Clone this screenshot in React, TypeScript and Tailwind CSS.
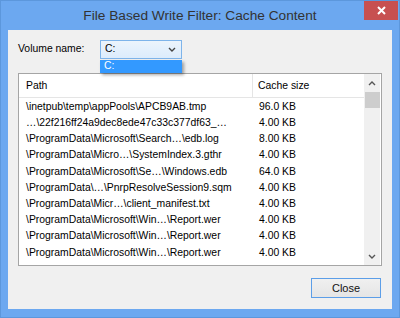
import React from "react";

const rows: [string, string][] = [
  ["\\inetpub\\temp\\appPools\\APCB9AB.tmp", "96.0 KB"],
  ["…\\22f216ff24a9dec8ede47c33c377df63_…", "4.00 KB"],
  ["\\ProgramData\\Microsoft\\Search…\\edb.log", "8.00 KB"],
  ["\\ProgramData\\Micro…\\SystemIndex.3.gthr", "4.00 KB"],
  ["\\ProgramData\\Microsoft\\Se…\\Windows.edb", "64.0 KB"],
  ["\\ProgramData\\…\\PnrpResolveSession9.sqm", "4.00 KB"],
  ["\\ProgramData\\Micr…\\client_manifest.txt", "4.00 KB"],
  ["\\ProgramData\\Microsoft\\Win…\\Report.wer", "4.00 KB"],
  ["\\ProgramData\\Microsoft\\Win…\\Report.wer", "4.00 KB"],
  ["\\ProgramData\\Microsoft\\Win…\\Report.wer", "4.00 KB"],
];

const font = { fontFamily: '"Liberation Sans", Arial, sans-serif' };

export default function App() {
  return (
    <div
      className="w-[400px] h-[318px] bg-[#6CA8F0] border border-[#5C97DC] flex flex-col relative overflow-hidden text-[#000]"
      style={font}
    >
      {/* Title bar */}
      <div className="h-[29px] flex items-center justify-center">
        <span className="text-[13.7px] text-[#333] leading-none mt-[1px]">
          File Based Write Filter: Cache Content
        </span>
      </div>
      <div className="absolute top-0 right-[1px] w-[34px] h-[19px] bg-[#C75050] flex items-center justify-center">
        <svg width="9" height="9" viewBox="0 0 9 9">
          <path d="M1 1 L8 8 M8 1 L1 8" stroke="#fff" strokeWidth="2" />
        </svg>
      </div>

      {/* Client */}
      <div className="mx-[7px] mb-[8px] flex-1 bg-[#F0F0F0] relative flex flex-col text-[10.4px]">
        <div className="flex items-center pl-[10px] pt-[10px]">
          <span className="w-[82px] leading-none">Volume name:</span>
          <div className="w-[82px] h-[19px] border border-[#7EB4EA] bg-gradient-to-b from-[#ECF4FC] to-[#DCECFC] flex items-center justify-between pl-[4px] pr-[5px]">
            <span className="leading-none">C:</span>
            <svg width="8" height="5" viewBox="0 0 8 5">
              <path d="M1 1 L4 4 L7 1" stroke="#444" strokeWidth="1.4" fill="none" />
            </svg>
          </div>
        </div>
        <div className="absolute left-[92px] top-[30px] w-[82px] h-[13px] bg-[#3399FF] text-white pl-[4px] flex items-center leading-none shadow-[2px_2px_3px_rgba(0,0,0,0.35)] z-10">
          C:
        </div>

        {/* List */}
        <div className="mx-[10px] mt-[14px] h-[193px] border border-[#A5A5A5] bg-white flex">
          <div className="flex-1 flex flex-col">
            <div className="h-[24px] flex border-b border-[#E5E5E5]">
              <div className="w-[234px] pl-[7px] pt-[1px] flex items-center border-r border-[#E5E5E5]">Path</div>
              <div className="flex-1 pl-[5px] pt-[1px] flex items-center">Cache size</div>
            </div>
            {rows.map(([p, s], i) => (
              <div key={i} className="h-[16.2px] pt-[2px] flex items-center leading-none">
                <div className="w-[234px] pl-[7px] whitespace-nowrap overflow-hidden">{p}</div>
                <div className="flex-1 pl-[6px] whitespace-nowrap">{s}</div>
              </div>
            ))}
          </div>
          <div className="w-[16px] bg-[#F0F0F0] flex flex-col items-center mr-[1px]">
            <div className="h-[18px] flex items-center justify-center">
              <svg width="8" height="5" viewBox="0 0 8 5">
                <path d="M1 4 L4 1 L7 4" stroke="#555" strokeWidth="1.4" fill="none" />
              </svg>
            </div>
            <div className="w-[15px] h-[16px] bg-[#CDCDCD]" />
            <div className="flex-1" />
            <div className="h-[17px] flex items-center justify-center">
              <svg width="8" height="5" viewBox="0 0 8 5">
                <path d="M1 1 L4 4 L7 1" stroke="#555" strokeWidth="1.4" fill="none" />
              </svg>
            </div>
          </div>
        </div>

        <div className="flex justify-end mr-[11px] mt-[12px]">
          <button className="w-[70px] h-[20px] border border-[#5C9EE8] bg-gradient-to-b from-[#F0F0F0] to-[#E5E5E5] flex items-center justify-center text-[11px] leading-none text-[#111]">
            Close
          </button>
        </div>
      </div>
    </div>
  );
}
